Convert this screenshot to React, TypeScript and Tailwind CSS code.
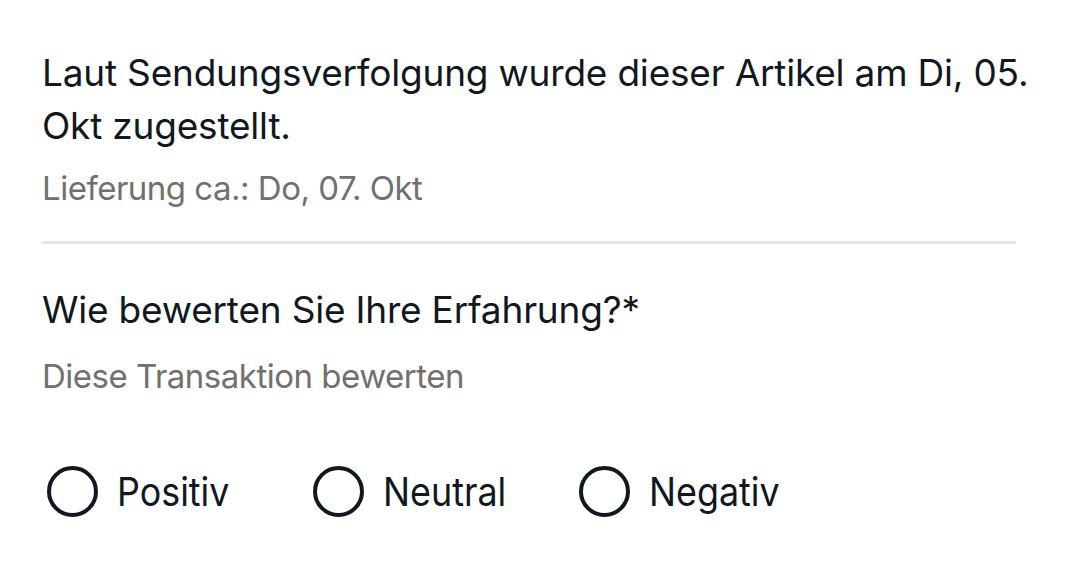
import { useState } from "react";

const options = ["Positiv", "Neutral", "Negativ"];

function Radio({ label, checked, onSelect }: { label: string; checked: boolean; onSelect: () => void }) {
	return (
		<button onClick={onSelect} className="flex items-center gap-[19px] w-[266px]">
			<span className="w-[51px] h-[51px] rounded-full border-[4px] border-[#111820] flex items-center justify-center shrink-0">
				{checked && <span className="w-[27px] h-[27px] rounded-full bg-[#111820]" />}
			</span>
			<span className="text-[39px] leading-[51px] text-[#111820] scale-x-[0.92] origin-left">{label}</span>
		</button>
	);
}

export default function App() {
	const [rating, setRating] = useState<string | null>(null);

	return (
		<div className="w-[1080px] h-[570px] bg-white font-['Inter',sans-serif] pl-[42px] pr-[36px] pt-[46px]">
			{/* Delivery info */}
			<p className="text-[37px] leading-[53px] text-[#111820] tracking-[-0.2px]">
				Laut Sendungsverfolgung wurde dieser Artikel am Di, 05. Okt zugestellt.
			</p>
			<p className="text-[33px] leading-[40px] text-[#707070] mt-[16px] tracking-[-0.5px]">
				Lieferung ca.: Do, 07. Okt
			</p>

			<div className="h-[3px] bg-[#e5e5e5] mt-[33px] mr-[28px]" />

			{/* Rating */}
			<h2 className="text-[37px] leading-[44px] text-[#111820] mt-[44px] tracking-[-0.2px]">
				Wie bewerten Sie Ihre Erfahrung?*
			</h2>
			<p className="text-[33px] leading-[40px] text-[#707070] mt-[24px] tracking-[-0.5px]">
				Diese Transaktion bewerten
			</p>

			<div className="flex items-center mt-[70px] ml-[5px]">
				{options.map((o) => (
					<Radio key={o} label={o} checked={rating === o} onSelect={() => setRating(o)} />
				))}
			</div>
		</div>
	);
}
